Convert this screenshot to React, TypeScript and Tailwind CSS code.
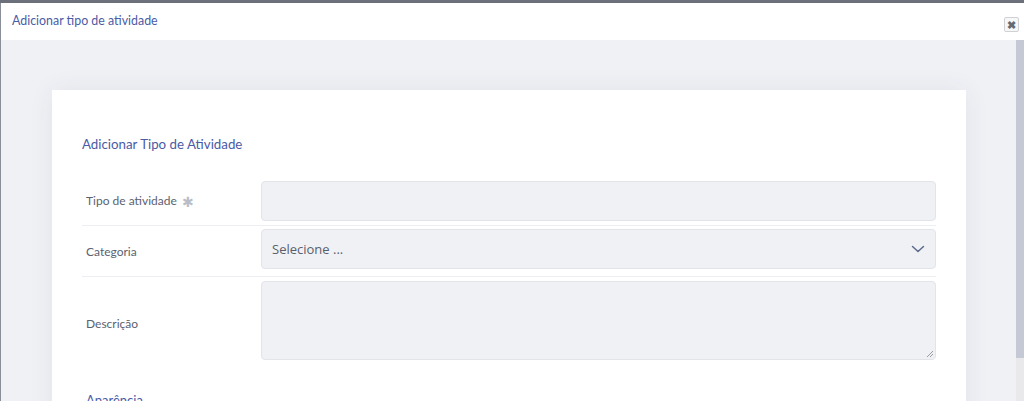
import React from "react";

export default function App() {
  return (
    <div className="h-[401px] w-[1024px] overflow-hidden bg-[#6c707b] pt-[3px]" style={{ fontFamily: "Lato, 'Noto Sans', sans-serif" }}>
      <div className="flex h-[398px] flex-col border-l border-[#8a8e99] bg-white">
        <div className="flex h-[37px] shrink-0 items-center justify-between pl-[11px] pr-[5px]">
          <span className="text-[12.4px] text-[#4b5ba6]">Adicionar tipo de atividade</span>
          <button className="mt-[5px] flex h-[15px] w-[15px] items-center justify-center rounded-[2px] border border-[#cfd1d6] bg-[#f7f7f8] text-[11px] font-bold leading-none text-[#666a72]">
            ✖
          </button>
        </div>
        <div className="flex min-h-0 flex-1">
          <div className="min-w-0 flex-1 overflow-hidden bg-[#f0f1f5] pl-[51px] pr-[50px] pt-[50px]">
            <div className="h-[400px] bg-white px-[30px] pt-[44px] shadow-[0_0_24px_rgba(40,50,80,0.07)]">
              <div className="h-[20px] text-[13.3px] leading-[20px] text-[#4b5ba6]">Adicionar Tipo de Atividade</div>
              <div className="mt-[27px]">
                <div className="flex items-center pb-[4px]">
                  <div className="flex w-[179px] items-center pl-[4px] text-[12px] text-[#5b6270]">
                    Tipo de atividade
                    <span className="ml-[5px] text-[14px] text-[#b9bdc8]">✱</span>
                  </div>
                  <div className="h-[40px] flex-1 rounded-[4px] border border-[#e2e4ea] bg-[#f0f1f5]" />
                </div>
                <div className="h-px bg-[#eceef2]" />
                <div className="flex items-center pb-[7px] pt-[3px]">
                  <div className="mt-[6px] w-[179px] pl-[4px] text-[12px] text-[#5b6270]">Categoria</div>
                  <div className="flex h-[40px] flex-1 items-center justify-between rounded-[4px] border border-[#e2e4ea] bg-[#f0f1f5] pl-[10px] pr-[10px]">
                    <span className="mt-[1px] text-[13px] text-[#5a5f6a]" style={{ fontFamily: "'Open Sans', sans-serif" }}>Selecione ...</span>
                    <svg width="14" height="8" viewBox="0 0 14 8" fill="none">
                      <path d="M1.5 1.5 L7 6.5 L12.5 1.5" stroke="#5b6a8c" strokeWidth="1.5" strokeLinecap="round" strokeLinejoin="round" />
                    </svg>
                  </div>
                </div>
                <div className="h-px bg-[#eceef2]" />
                <div className="flex items-center pt-[4px]">
                  <div className="mt-[6px] w-[179px] pl-[4px] text-[12px] text-[#5b6270]">Descrição</div>
                  <div className="relative h-[79px] flex-1 rounded-[4px] border border-[#e2e4ea] bg-[#f0f1f5]">
                    <svg className="absolute bottom-[1px] right-[1px]" width="8" height="8" viewBox="0 0 8 8">
                      <path d="M7 1 L1 7 M7 4 L4 7" stroke="#9a9ca3" strokeWidth="1" />
                    </svg>
                  </div>
                </div>
                <div className="mt-[31px] pl-[4px] text-[13px] text-[#4b5ba6]">Aparência</div>
              </div>
            </div>
          </div>
          <div className="flex w-[8px] shrink-0 flex-col bg-[#e9e9ec]">
            <div className="h-[318px] bg-[#c5c9d6]" />
          </div>
        </div>
      </div>
    </div>
  );
}
